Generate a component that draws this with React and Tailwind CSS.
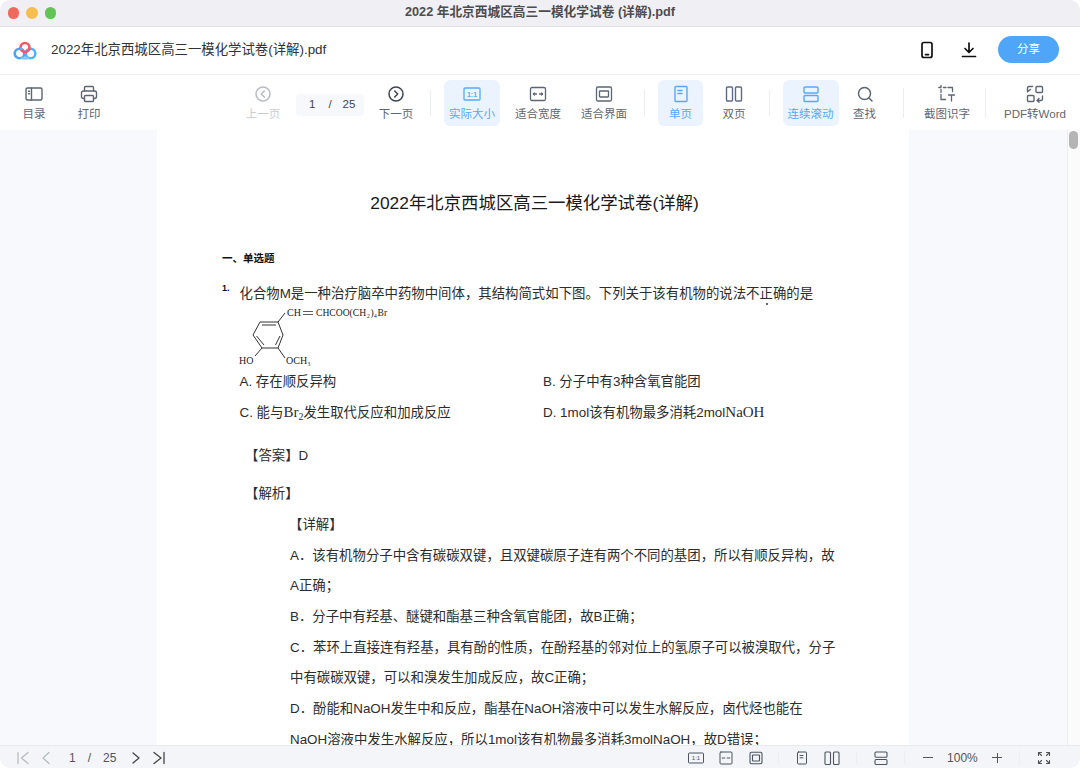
const FONT = '"Liberation Sans","Noto Sans CJK SC",sans-serif';

function Ico({ w = 24, h = 24, color = '#5c6572', sw = 1.5, children }) {
  return (
    <svg width={w} height={h} viewBox={`0 0 ${w} ${h}`} fill="none" stroke={color} strokeWidth={sw} strokeLinecap="round" strokeLinejoin="round">
      {children}
    </svg>
  );
}

const BLUE = '#59a8f8';

function Item({ w, ml = 0, label, active, disabled, children }) {
  return (
    <div
      style={{ width: w, marginLeft: ml }}
      className={`h-[46px] shrink-0 flex flex-col items-center rounded-md pt-[2px] ${active ? 'bg-[#ebf4fe]' : ''}`}
    >
      <div className="h-[24px] flex items-center justify-center">{children}</div>
      <div className={`text-[11.5px] leading-[16px] whitespace-nowrap ${active ? 'text-[#59a8f8]' : disabled ? 'text-[#c9cdd3]' : 'text-[#5f6670]'}`}>{label}</div>
    </div>
  );
}

function Sep({ ml, h = 'h-[26px]' }) {
  return <div style={{ marginLeft: ml }} className={`w-px ${h} bg-[#eceef1] shrink-0`} />;
}

function Chem() {
  const t = { fontFamily: '"Liberation Serif",serif', fill: '#222', stroke: 'none' };
  return (
    <svg width="170" height="63" viewBox="0 0 170 63" className="block ml-[-2px]" fill="none" stroke="#333" strokeWidth="1">
      <path d="M40 16 L22 16 L15 29 L24 42 L40 42 L45 29 Z" />
      <path d="M24 19 L38 19 M18.5 30 L26 39 M42 30 L37.5 39" />
      <path d="M40 16 L47 7" />
      <path d="M24 42 L17 50 M40 42 L47 52" />
      <text x="49" y="10" fontSize="10" style={t}>CH</text>
      <path d="M65 5.5 H75 M65 8.5 H75" strokeWidth="0.8" />
      <text x="78" y="10" fontSize="9.6" style={t}>CHCOO(CH</text>
      <text x="129" y="12" fontSize="5.5" style={t}>2</text>
      <text x="132.5" y="10" fontSize="9.6" style={t}>)</text>
      <text x="136" y="12" fontSize="5.5" style={t}>4</text>
      <text x="139.5" y="10" fontSize="9.6" style={t}>Br</text>
      <text x="1" y="57.5" fontSize="10" style={t}>HO</text>
      <text x="48" y="57.5" fontSize="10" style={t}>OCH</text>
      <text x="69.5" y="59.5" fontSize="5.5" style={t}>3</text>
    </svg>
  );
}

function Logo() {
  return (
    <svg width="24" height="20" viewBox="0 0 24 20" fill="none" strokeWidth="2.6">
      <circle cx="6.5" cy="12.5" r="4.8" stroke="#4da3f5" />
      <circle cx="17.5" cy="12.5" r="4.8" stroke="#4fb4f7" />
      <circle cx="12" cy="6.5" r="4.5" stroke="#ef5a66" />
      <path d="M8 16.5 C 10 17.5 14 17.5 16 16.5" stroke="#7cc7fa" />
      <path d="M7 7.5 A 4.8 4.8 0 0 1 9 8.4" stroke="#6fb0ee" />
    </svg>
  );
}

const Serif = ({ children }) => <span style={{ fontFamily: '"Liberation Serif",serif' }} className="text-[15px] leading-[0]">{children}</span>;

function BottomGlyph({ cx, children }) {
  return <div style={{ width: cx }} className="shrink-0 flex justify-center items-center">{children}</div>;
}

export default function App() {
  return (
    <div style={{ fontFamily: FONT }} className="w-[1080px] h-[768px] overflow-hidden bg-white rounded-t-[10px] rounded-b-[10px] flex flex-col text-[#333]">
      {/* title bar */}
      <div className="h-[27px] shrink-0 bg-[#f0eff4] border-b border-[#dfdee2] flex items-center relative">
        <div className="flex items-center gap-[7px] pl-[7.5px]">
          <div className="w-[11.5px] h-[11.5px] rounded-full bg-[#ee6a5f]" />
          <div className="w-[11.5px] h-[11.5px] rounded-full bg-[#f6bd4f]" />
          <div className="w-[11.5px] h-[11.5px] rounded-full bg-[#61c454]" />
        </div>
        <div className="absolute inset-0 flex items-center justify-center text-[12.7px] font-bold text-[#4c4c4f] pb-[1px]">2022 年北京西城区高三一模化学试卷 (详解).pdf</div>
      </div>

      {/* header */}
      <div className="h-[48px] shrink-0 bg-white border-b border-[#f0f0f2] flex items-center">
        <div className="ml-[13px] w-[24px] flex"><Logo /></div>
        <div className="ml-[14px] text-[13.4px] text-[#2f3237] whitespace-nowrap">2022年北京西城区高三一模化学试卷(详解).pdf</div>
        <div className="ml-auto flex items-center pb-[2px]">
          <svg width="14" height="18" viewBox="0 0 14 18" fill="none" stroke="#111" strokeWidth="1.7">
            <rect x="2" y="1.5" width="10" height="15" rx="2" />
            <path d="M5.5 13.6 H8.5" strokeLinecap="round" />
          </svg>
          <svg className="ml-[26px]" width="18" height="18" viewBox="0 0 18 18" fill="none" stroke="#111" strokeWidth="1.7" strokeLinecap="round" strokeLinejoin="round">
            <path d="M9 2 V11 M5 7.5 L9 11.5 L13 7.5 M2.5 15.5 H15.5" />
          </svg>
          <div className="ml-[20px] mr-[21px] w-[61px] h-[27px] rounded-full bg-[#4fa6f9] text-white text-[11.5px] flex items-center justify-center">分享</div>
        </div>
      </div>

      {/* toolbar */}
      <div className="h-[55px] shrink-0 bg-white flex items-center">
        <Item w={56} ml={6} label="目录">
          <Ico w={20} h={18} sw={1.4}><rect x="2" y="3" width="16" height="12" rx="1.5" /><path d="M7.5 3 V15 M4.5 6.2 H5.5 M4.5 8.8 H5.5" /></Ico>
        </Item>
        <Item w={56} ml={-1} label="打印">
          <Ico w={20} h={20} sw={1.4}><path d="M5.5 7 V3.5 A1 1 0 0 1 6.5 2.5 H13.5 A1 1 0 0 1 14.5 3.5 V7" /><path d="M5.5 14.5 H4.5 A2 2 0 0 1 2.5 12.5 V9 A2 2 0 0 1 4.5 7 H15.5 A2 2 0 0 1 17.5 9 V12.5 A2 2 0 0 1 15.5 14.5 H14.5" /><rect x="5.5" y="11.5" width="9" height="6" rx="1" /></Ico>
        </Item>
        <Item w={56} ml={118} label="上一页" disabled>
          <Ico w={18} h={18} color="#b9bdc3"><circle cx="9" cy="9" r="7" /><path d="M10.3 6 L7.3 9 L10.3 12" /></Ico>
        </Item>
        <div className="ml-[5px] mt-[5px] w-[68px] h-[22px] rounded-[4px] bg-[#f7f8fb] shrink-0 flex items-center text-[11.5px] text-[#444]">
          <span className="ml-[13px]">1</span><span className="ml-[13px]">/</span><span className="ml-[11px]">25</span>
        </div>
        <Item w={56} ml={4} label="下一页">
          <Ico w={18} h={18} color="#3f4650"><circle cx="9" cy="9" r="7" /><path d="M7.7 6 L10.7 9 L7.7 12" /></Ico>
        </Item>
        <Sep ml={6} />
        <Item w={56} ml={13} label="实际大小" active>
          <svg width="18" height="14" viewBox="0 0 18 14" fill="none" stroke={BLUE} strokeWidth="1.3"><rect x="1" y="1" width="16" height="12" rx="1" /><text x="9" y="9.6" textAnchor="middle" fontSize="7" fontWeight="700" fill={BLUE} stroke="none" fontFamily="Liberation Sans">1:1</text></svg>
        </Item>
        <Item w={66} ml={5} label="适合宽度">
          <Ico w={18} h={16} sw={1.3}><rect x="1.5" y="1.5" width="15" height="13" rx="1.5" /><path d="M4.5 8 H7.5 M10.5 8 H13.5" /><path d="M5.5 7 L4.5 8 L5.5 9 M12.5 7 L13.5 8 L12.5 9" /></Ico>
        </Item>
        <Item w={66} label="适合界面">
          <Ico w={18} h={18} sw={1.3}><rect x="1.5" y="2" width="15" height="14" rx="1.5" /><rect x="4.5" y="6" width="9" height="6" rx="0.5" /></Ico>
        </Item>
        <Sep ml={7} />
        <Item w={45} ml={13} label="单页" active>
          <Ico w={16} h={18} color={BLUE} sw={1.4}><rect x="2" y="1.5" width="12" height="15" rx="1" /><path d="M5 5.5 H9 M5 8.5 H9" /></Ico>
        </Item>
        <Item w={45} ml={8.5} label="双页">
          <Ico w={18} h={18} color="#5f6b85" sw={1.4}><rect x="1.5" y="2" width="6" height="14" rx="1" /><rect x="10.5" y="2" width="6" height="14" rx="1" /></Ico>
        </Item>
        <Sep ml={12} />
        <Item w={56} ml={13} label="连续滚动" active>
          <Ico w={18} h={18} color={BLUE} sw={1.4}><rect x="2" y="2" width="14" height="6" rx="1" /><rect x="2" y="10.5" width="14" height="6" rx="1" /></Ico>
        </Item>
        <Item w={45} ml={3.5} label="查找">
          <Ico w={18} h={18}><circle cx="8.5" cy="8.5" r="6" /><path d="M13 13 L16 16" /></Ico>
        </Item>
        <Sep ml={16} h="h-[30px]" />
        <Item w={60} ml={13} label="截图识字">
          <Ico w={20} h={20} sw={1.3}><path d="M4 1.5 V3.5 M1.8 3.5 H4 M6.5 3.5 H9 M11 3.5 H15.5 V7.5 M4 5.5 V8.5 M4 10.5 V15.5 H8.5" /><path d="M11.5 11 H17.5 M14.5 11 V17" /></Ico>
        </Item>
        <Sep ml={8} h="h-[30px]" />
        <Item w={70} ml={14} label="PDF转Word">
          <Ico w={18} h={18} sw={1.4}><path d="M6.5 1.5 H3 A1.5 1.5 0 0 0 1.5 3 V6.5 M4.5 4.5 L1.5 6.8" /><rect x="10" y="1.5" width="6.5" height="6" rx="1" /><rect x="1.5" y="10.5" width="6.5" height="6" rx="1" /><path d="M16.5 11 V14 A1.5 1.5 0 0 1 15 15.5 H11 M13 13.5 L11 15.5 L13 17.3" /></Ico>
        </Item>
      </div>

      {/* main */}
      <div className="flex-1 min-h-0 flex bg-[#f8f9fc] overflow-hidden">
        <div className="w-[157px] shrink-0" />
        <div className="w-[752px] shrink-0 bg-white pl-[65px] pt-[61px] text-[13.4px] text-[#2c2c2c] relative">
          <div className="ml-[-62px] h-[24px] leading-[24px] text-center text-[17.4px] text-[#1a1a1a] whitespace-nowrap">2022年北京西城区高三一模化学试卷(详解)</div>
          <div className="mt-[31px] h-[24px] leading-[24px] text-[10.5px] font-bold text-[#111]">一、单选题</div>
          <div className="mt-[12px] h-[24px] leading-[24px] flex whitespace-nowrap relative">
            <span className="w-[17.5px] text-[9px] font-bold text-[#111] leading-[12px]">1.</span>
            <span>化合物M是一种治疗脑卒中药物中间体，其结构简式如下图。下列关于该有机物的说法不正确的是</span>
            <span className="absolute left-[544px] top-[21px] w-[2px] h-[2px] rounded-full bg-[#333]" />
          </div>
          <div className="pl-[18px]"><Chem /></div>
          <div className="pl-[17.5px] mt-[1px] h-[24px] leading-[24px] flex whitespace-nowrap">
            <span className="w-[303.5px]">A. 存在顺反异构</span><span>B. 分子中有3种含氧官能团</span>
          </div>
          <div className="pl-[17.5px] mt-[7px] h-[24px] leading-[24px] flex whitespace-nowrap">
            <span className="w-[303.5px]">C. 能与<Serif>Br<sub className="text-[10px] leading-[0]">2</sub></Serif>发生取代反应和加成反应</span><span>D. 1mol该有机物最多消耗2mol<Serif>NaOH</Serif></span>
          </div>
          <div className="pl-[23px] mt-[19px] h-[24px] leading-[24px] whitespace-nowrap">【答案】D</div>
          <div className="pl-[23px] mt-[14px] h-[24px] leading-[24px] whitespace-nowrap">【解析】</div>
          <div className="pl-[67px] mt-[7px] h-[24px] leading-[24px] whitespace-nowrap">【详解】</div>
          <div className="pl-[68px] mt-[3.6px] leading-[30.7px] whitespace-nowrap">
            <div>A．该有机物分子中含有碳碳双键，且双键碳原子连有两个不同的基团，所以有顺反异构，故</div>
            <div>A正确；</div>
            <div>B．分子中有羟基、醚键和酯基三种含氧官能团，故B正确；</div>
            <div>C．苯环上直接连有羟基，具有酚的性质，在酚羟基的邻对位上的氢原子可以被溴取代，分子</div>
            <div>中有碳碳双键，可以和溴发生加成反应，故C正确；</div>
            <div>D．酚能和NaOH发生中和反应，酯基在NaOH溶液中可以发生水解反应，卤代烃也能在</div>
            <div className="mt-[9px] leading-[12px]">NaOH溶液中发生水解反应，所以1mol该有机物最多消耗3molNaOH，故D错误；</div>
          </div>
        </div>
        <div className="flex-1" />
        <div className="w-[13px] shrink-0 bg-[#fbfbfb] border-l border-[#ececec] pl-[1px] pt-[1px]">
          <div className="w-[9px] h-[18px] rounded-full bg-[#b4b4b4]" />
        </div>
      </div>

      {/* bottom */}
      <div className="h-[23px] shrink-0 bg-[#f3f5f8] border-t border-[#e8eaee] flex items-center pt-[1px] text-[12px] text-[#555]">
        <div className="ml-[15px] flex items-center">
          <Ico w={16} h={14} color="#b5bac2" sw={1.2}><path d="M3 1.5 V12.5 M13 1.5 L6.5 7 L13 12.5" /></Ico>
          <div className="w-[9px]" />
          <Ico w={12} h={14} color="#b5bac2" sw={1.2} ><path d="M9 1.5 L3 7 L9 12.5" /></Ico>
        </div>
        <span className="ml-[17px]">1</span>
        <span className="ml-[12px]">/</span>
        <span className="ml-[12px]">25</span>
        <div className="ml-[14px] flex items-center">
          <Ico w={12} h={14} color="#444" sw={1.3}><path d="M3 2 L9 7 L3 12" /></Ico>
          <div className="w-[9px]" />
          <Ico w={16} h={14} color="#444" sw={1.3}><path d="M3 1.5 L10 7 L3 12.5 M13 1.5 V12.5" /></Ico>
        </div>
        <div className="ml-[514px] flex items-center">
          <BottomGlyph cx={30}>
            <svg width="16" height="12" viewBox="0 0 16 12" fill="none" stroke="#4b5460" strokeWidth="1"><rect x="0.5" y="1" width="15" height="10" rx="1" /><text x="8" y="8.4" textAnchor="middle" fontSize="6" fill="#4b5460" stroke="none" fontFamily="Liberation Sans">1:1</text></svg>
          </BottomGlyph>
          <BottomGlyph cx={30}>
            <Ico w={14} h={14} sw={1} color="#4b5460"><rect x="1" y="1" width="12" height="12" rx="1" /><path d="M3.2 7 H5.8 M8.2 7 H10.8" /></Ico>
          </BottomGlyph>
          <BottomGlyph cx={29}>
            <Ico w={14} h={14} sw={1.1} color="#4b5460"><rect x="1" y="1.2" width="12" height="11.6" rx="1.5" /><rect x="3.5" y="4" width="7" height="6" rx="0.5" /></Ico>
          </BottomGlyph>
          <Sep ml={8} h="h-[14px]" />
          <div className="ml-[15px] w-[16px] flex justify-center">
            <Ico w={12} h={14} sw={1} color="#4b5460"><rect x="1.5" y="1" width="9" height="12" rx="1" /><path d="M4 4.5 H7 M4 6.8 H7" /></Ico>
          </div>
          <div className="ml-[14px] w-[16px] flex justify-center">
            <Ico w={16} h={14} sw={1.1} color="#4b5460"><rect x="1" y="1" width="5.5" height="12.5" rx="1" /><rect x="9.5" y="1" width="5.5" height="12.5" rx="1" /></Ico>
          </div>
          <Sep ml={16} h="h-[14px]" />
          <div className="ml-[16px] w-[16px] flex justify-center">
            <Ico w={14} h={14} sw={1.1} color="#4b5460"><rect x="1" y="1" width="12" height="5.2" rx="1" /><rect x="1" y="8.5" width="12" height="5" rx="1" /></Ico>
          </div>
          <Sep ml={15} h="h-[14px]" />
          <div className="ml-[18px] w-[10px] h-[1.6px] bg-[#555]" />
          <span className="ml-[13px] w-[32px] text-center text-[#555] whitespace-nowrap">100%</span>
          <div className="ml-[14px] w-[10px] h-[10px] relative">
            <div className="absolute left-0 top-[4.2px] w-[10px] h-[1.6px] bg-[#555]" />
            <div className="absolute left-[4.2px] top-0 w-[1.6px] h-[10px] bg-[#555]" />
          </div>
          <Sep ml={17} h="h-[14px]" />
          <div className="ml-[17px] w-[14px] flex justify-center">
            <Ico w={14} h={14} sw={1.1} color="#555"><path d="M1.5 4.5 V1.5 H4.5 M9.5 1.5 H12.5 V4.5 M1.5 9.5 V12.5 H4.5 M12.5 9.5 V12.5 H9.5 M1.5 1.5 L4.5 4.5 M12.5 1.5 L9.5 4.5 M1.5 12.5 L4.5 9.5 M12.5 12.5 L9.5 9.5" /></Ico>
          </div>
        </div>
      </div>
    </div>
  );
}
